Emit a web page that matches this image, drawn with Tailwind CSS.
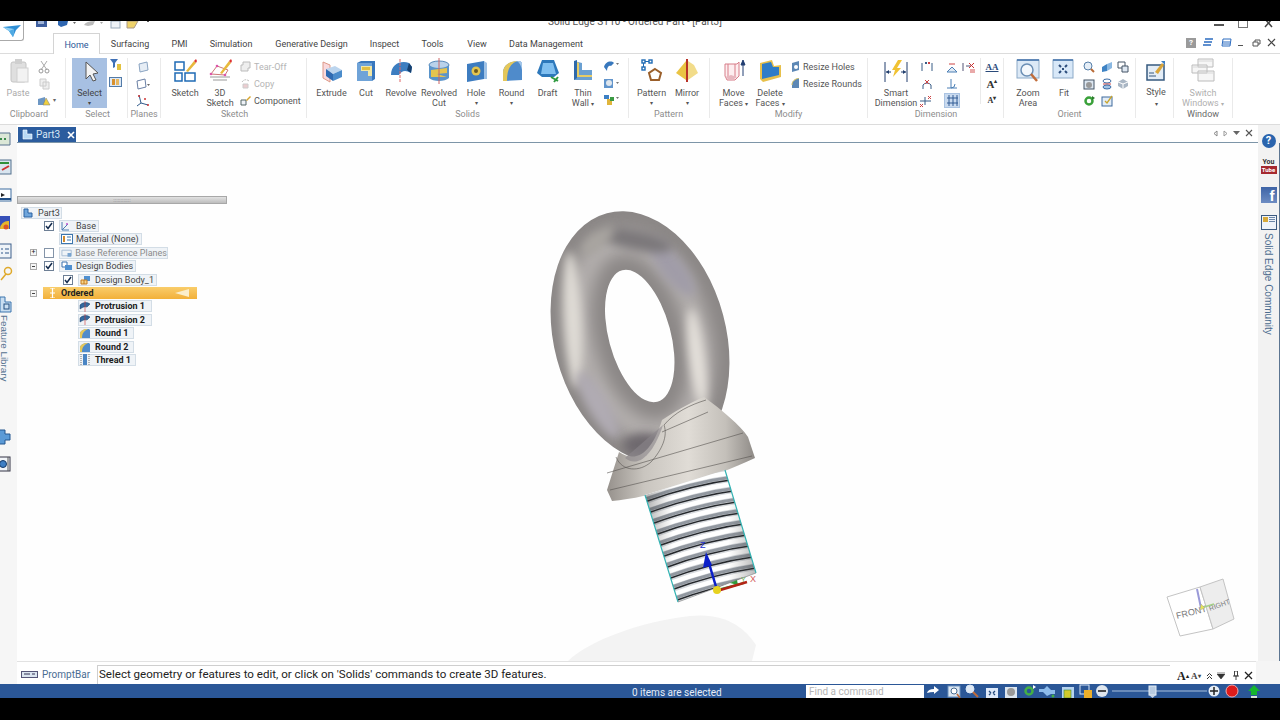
<!DOCTYPE html>
<html><head><meta charset="utf-8">
<script src="https://cdn.jsdelivr.net/npm/@tailwindcss/browser@4"></script>
</head>
<body class="bg-black overflow-hidden">
<div class="w-[1280px] h-[720px] flex flex-col bg-black text-[#555] text-[9px] leading-[10px] whitespace-nowrap [font-family:Roboto,sans-serif] overflow-hidden">
  <div class="h-[21px] bg-black shrink-0"></div>
  <div class="relative flex-1 flex flex-col bg-white overflow-hidden">
    <!-- application button -->
    <div class="absolute left-0 top-0 w-[24px] h-[20px] rounded-br-[3px] border-r border-b border-[#aaa] flex items-center justify-center z-20 bg-white">
      <svg width="20" height="14" viewBox="0 0 20 14"><path d="M1 3L19 1L14 6L11 13L7 7Z" fill="#2f8fd6"/><path d="M1 3L12 5L11 13L7 7Z" fill="#8fd0f4"/><path d="M7 7L12 5L11 13Z" fill="#4fa9e2"/></svg>
    </div>
    <!-- title strip -->
    <div class="relative h-[12px] shrink-0 overflow-hidden flex">
      <div class="w-[34px] shrink-0"></div>
      <svg width="130" height="12" viewBox="0 0 130 12"><path d="M2 0H13V6H2Z" fill="#3f5f9f"/><path d="M4 0H10V3H4Z" fill="#9fb4d8"/><path d="M24 0L30 0L34 0L33 4L27 6L24 4Z" fill="#2f66b0"/><path d="M39 1H42L40.500 3Z" fill="#666"/><path d="M50 4Q52 0 61 0L59 4L54 5Z" fill="#bbb"/><path d="M66 1H69L67.500 3Z" fill="#aaa"/><rect x="77" y="0" width="9" height="7" fill="#eef2f7" stroke="#9ab"/><path d="M93 0H101L104 0L100 7H93Z" fill="#efd36b" stroke="#a98"/><path d="M113 0H115V1H113Z" fill="#555"/></svg>
      <div class="absolute left-[548px] top-[-5px] text-[10px] leading-[12px] text-[#555]">Solid Edge ST10 - Ordered Part - [Part3]</div>
      <div class="absolute left-[1214px] top-[0px] flex items-start gap-[14px]">
        <div class="w-[10px] h-[1.500px] bg-[#555] mt-[3px]"></div>
        <div class="w-[10px] h-[7px] border border-t-0 border-[#777]"></div>
        <svg width="12" height="8" viewBox="0 0 12 8"><path d="M3 -2L10 6M10 -2L3 6" stroke="#444" stroke-width="1.500"/></svg>
      </div>
    </div>
    <!-- tabs -->
    <div class="relative h-[21px] shrink-0 flex border-b border-[#dcdcdc] text-[9px] leading-[22px] text-[#444]">
      <div class="w-[53px] shrink-0"></div>
      <div class="w-[47px] shrink-0 h-[21px] bg-white border border-b-0 border-[#d4d4d4] text-center text-[#2b5797] z-10">Home</div>
      <div class="w-[60px] shrink-0 text-center">Surfacing</div>
      <div class="w-[39px] shrink-0 text-center">PMI</div>
      <div class="w-[64px] shrink-0 text-center">Simulation</div>
      <div class="w-[97px] shrink-0 text-center">Generative Design</div>
      <div class="w-[49px] shrink-0 text-center">Inspect</div>
      <div class="w-[47px] shrink-0 text-center">Tools</div>
      <div class="w-[42px] shrink-0 text-center">View</div>
      <div class="w-[96px] shrink-0 text-center">Data Management</div>
      <div class="ml-auto pr-[4px] flex items-center gap-[6px] pb-[1px]">
        <div class="w-[10px] h-[10px] bg-[#9a9a9a] text-white text-[8px] leading-[10px] text-center font-bold">?</div>
        <svg width="12" height="10" viewBox="0 0 12 10"><path d="M3 1H11M2 4H10M1 7H9" stroke="#2c6cc0" stroke-width="1.500"/></svg>
        <svg width="12" height="10" viewBox="0 0 12 10"><path d="M3 1H11L10 8H2ZM3 4H10M3 6H10" fill="none" stroke="#2c6cc0"/></svg>
        <div class="w-[5px] h-[1px] bg-[#555] mt-[6px]"></div>
        <svg class="ml-[3px]" width="9" height="8" viewBox="0 0 9 8"><path d="M1 3H6V7H1ZM3 3V1H8V5H6" fill="none" stroke="#555"/></svg>
        <svg class="ml-[0px]" width="9" height="9" viewBox="0 0 9 9"><path d="M1 1L8 8M8 1L1 8" stroke="#444" stroke-width="1.200"/></svg>
      </div>
    </div>
    <!-- ribbon -->
    <div class="h-[71px] shrink-0 flex border-b border-[#dcdcdc] bg-white">
      <!-- Clipboard -->
      <div class="w-[66px] shrink-0 flex flex-col">
        <div class="h-[55px] flex pt-[4px]">
          <div class="w-[36px] flex flex-col items-center">
            <svg class="shrink-0" width="24" height="26" viewBox="0 0 24 26"><rect x="5" y="4" width="15" height="20" rx="2" fill="#dfdfdf" stroke="#c4c4c4"/><rect x="9" y="1" width="7" height="5" fill="#cfcfcf"/><rect x="11" y="10" width="11" height="14" fill="#f2f2f2" stroke="#d0d0d0"/></svg>
            <div class="mt-[4px] text-[#aaa]">Paste</div>
          </div>
          <div class="w-[16px] flex flex-col items-center">
            <div class="h-[17px] flex items-center"><svg width="12" height="14" viewBox="0 0 12 14"><path d="M3 1L9 10M9 1L3 10" stroke="#aaa"/><circle cx="3" cy="11" r="2" fill="none" stroke="#999"/><circle cx="9" cy="11" r="2" fill="none" stroke="#999"/></svg></div>
            <div class="h-[17px] flex items-center"><svg width="11" height="12" viewBox="0 0 11 12"><path d="M1 1H7V8H1ZM4 4H10V11H4Z" fill="#efefef" stroke="#ccc"/></svg></div>
            <div class="h-[17px] flex items-center"><svg width="14" height="13" viewBox="0 0 14 13"><path d="M1 5L8 3V11L1 11Z" fill="#6d97c4"/><path d="M9 4L13 11H6Z" fill="#f0d040" stroke="#777" stroke-width=".5"/></svg></div>
          </div>
          <div class="text-[#666] text-[6px] mt-[37px] ml-[1px]">▾</div>
        </div>
        <div class="text-center text-[#8d8d8d] pr-[8px]">Clipboard</div>
      </div>
      <div class="w-px h-[60px] mt-[4px] bg-[#eaeaea] -ml-[1px]"></div>
      <!-- Select -->
      <div class="w-[61px] shrink-0 flex flex-col">
        <div class="h-[55px] flex pt-[4px]">
          <div class="ml-[6px] w-[35px] h-[50px] bg-[#a7c0e2] flex flex-col items-center text-[#444]">
            <svg class="shrink-0" width="24" height="26" viewBox="0 0 24 26"><path d="M8 4L8 21L12 17L15 23L18 22L15 16L20 15Z" fill="#f4f4f4" stroke="#555"/></svg>
            <div class="mt-[4px]">Select</div>
            <div class="text-[6px] leading-[8px] mt-[1px]">▾</div>
          </div>
          <div class="w-[16px] flex flex-col items-center">
            <div class="h-[17px] flex items-center pb-[4px]"><svg width="13" height="13" viewBox="0 0 13 13"><path d="M1 1H9L6 5V9L4 10V5Z" fill="#3f70b5"/><path d="M8 6H12V12H8Z" fill="#e3c23f"/></svg></div>
            <div class="h-[17px] flex items-center pb-[4px]"><svg width="13" height="10" viewBox="0 0 13 10"><rect x=".5" y=".5" width="12" height="9" fill="#dce8f5" stroke="#537ba8"/><rect x="3" y="2" width="3" height="6" fill="#d8912e"/><rect x="7" y="2" width="3" height="6" fill="#e7b862"/></svg></div>
          </div>
        </div>
        <div class="text-center text-[#8d8d8d] pl-[2px]">Select</div>
      </div>
      <div class="w-px h-[60px] mt-[4px] bg-[#eaeaea]"></div>
      <!-- Planes -->
      <div class="w-[32px] shrink-0 flex flex-col">
        <div class="h-[55px] flex flex-col items-center pt-[4px] pr-[3px]">
          <div class="h-[17px] flex items-center"><svg width="12" height="12" viewBox="0 0 12 12"><path d="M2 3L10 1L11 9L3 11Z" fill="#e6edf5" stroke="#8aa4c2"/></svg></div>
          <div class="h-[17px] flex items-center"><svg width="16" height="12" viewBox="0 0 16 12"><path d="M2 3L10 1L11 9L3 11Z" fill="#fff" stroke="#6a80a5"/><path d="M12 6H15L13.500 8Z" fill="#666"/></svg></div>
          <div class="h-[17px] flex items-center"><svg width="13" height="13" viewBox="0 0 13 13"><path d="M3 1L5 9L12 11M5 9L1 12" stroke="#2f5a8a" fill="none"/><circle cx="3" cy="2" r="1" fill="#c33"/><circle cx="12" cy="11" r="1" fill="#c33"/><circle cx="9" cy="5" r="1" fill="#c33"/></svg></div>
        </div>
        <div class="text-center text-[#8d8d8d]">Planes</div>
      </div>
      <div class="w-px h-[60px] mt-[4px] bg-[#eaeaea]"></div>
      <!-- Sketch -->
      <div class="w-[145px] shrink-0 flex flex-col">
        <div class="h-[55px] flex pt-[4px]">
          <div class="w-[48px] flex flex-col items-center">
            <svg class="shrink-0" width="24" height="26" viewBox="0 0 24 26"><rect x="2" y="4" width="9" height="8" fill="none" stroke="#1f6bb5" stroke-width="1.500"/><rect x="2" y="15" width="7" height="8" fill="none" stroke="#1f6bb5" stroke-width="1.500"/><rect x="12" y="15" width="10" height="8" fill="none" stroke="#1f6bb5" stroke-width="1.500"/><path d="M13 13L21 3L23 5L15 14Z" fill="#e8b93c"/><path d="M21 3L23 1L24 3L23 5Z" fill="#d33"/></svg>
            <div class="mt-[4px]">Sketch</div>
          </div>
          <div class="w-[30px] flex flex-col items-center -ml-[4px]">
            <svg class="shrink-0" width="24" height="26" viewBox="0 0 24 26"><path d="M3 16L9 8L20 12L17 17Z" fill="none" stroke="#c77"/><path d="M2 19H22M5 22H19" stroke="#999"/><path d="M12 15L21 3L23 5L14 16Z" fill="#e8b93c"/><path d="M21 3L23 1L24 3L23 5Z" fill="#d33"/><circle cx="3" cy="16" r="1.300" fill="#d5a"/><circle cx="9" cy="8" r="1.300" fill="#d5a"/><circle cx="17" cy="17" r="1.300" fill="#d5a"/></svg>
            <div class="mt-[4px] text-center">3D<br>Sketch</div>
          </div>
          <div class="ml-[5px] flex flex-col">
            <div class="h-[17px] flex items-center gap-[3px] text-[#b5b5b5]"><svg width="11" height="11" viewBox="0 0 11 11"><path d="M3 1H10V7H8V10H1V4H3Z" fill="#eee" stroke="#bbb"/></svg>Tear-Off</div>
            <div class="h-[17px] flex items-center gap-[3px] text-[#b5b5b5]"><svg width="11" height="11" viewBox="0 0 11 11"><path d="M2 4Q5 0 9 3" fill="none" stroke="#bbb" stroke-dasharray="2 1"/><path d="M3 6H8V10H3Z" fill="#eccdd0" stroke="#ccc"/></svg>Copy</div>
            <div class="h-[17px] flex items-center gap-[3px]"><svg width="11" height="11" viewBox="0 0 11 11"><path d="M1 5H6V10H1Z" fill="#eef2f7" stroke="#566"/><path d="M6 5L10 1L11 2L7 6Z" fill="#d8a52e"/></svg>Component</div>
          </div>
        </div>
        <div class="text-center text-[#8d8d8d] pl-[2px]">Sketch</div>
      </div>
      <div class="w-px h-[60px] mt-[4px] bg-[#eaeaea]"></div>
      <!-- Solids -->
      <div class="w-[321px] shrink-0 flex flex-col">
        <div class="h-[55px] flex pt-[4px]">
          <div class="w-[46px] flex flex-col items-center pl-[3px]">
            <svg class="shrink-0" width="24" height="26" viewBox="0 0 24 26"><path d="M3 4L10 7V24L3 20Z" fill="#f9d9dc" stroke="#d98"/><path d="M6 11L15 8L22 12L13 16Z" fill="#bcd5ee"/><path d="M6 11L13 16V23L6 18Z" fill="#2f6bb2"/><path d="M13 16L22 12V19L13 23Z" fill="#4b8ccb"/></svg>
            <div class="mt-[4px]">Extrude</div>
          </div>
          <div class="w-[26px] flex flex-col items-center">
            <svg class="shrink-0" width="24" height="26" viewBox="0 0 24 26"><path d="M3 5L7 3H21V21L18 23H3Z" fill="#3877bd"/><path d="M3 5H18V23H3Z" fill="#6fa3d8"/><path d="M7 8H18V18H14V13H7Z" fill="#f2e7a4"/><path d="M8 9H16V12H8Z" fill="#e1bf45"/></svg>
            <div class="mt-[4px]">Cut</div>
          </div>
          <div class="w-[44px] flex flex-col items-center">
            <svg class="shrink-0" width="24" height="26" viewBox="0 0 24 26"><path d="M2 17C2 6 12 2 20 5L23 9L22 15C17 12 13 12 10 17Z" fill="#3c7dc0"/><path d="M20 5L23 9L22 15L18 12Z" fill="#16406f"/><path d="M11 1V25" stroke="#d66" stroke-dasharray="3 1"/></svg>
            <div class="mt-[4px]">Revolve</div>
          </div>
          <div class="w-[32px] flex flex-col items-center">
            <svg class="shrink-0" width="24" height="26" viewBox="0 0 24 26"><ellipse cx="12" cy="7" rx="10" ry="4" fill="#b9d2ea" stroke="#5688b8"/><path d="M2 7V20C6 24 18 24 22 20V7C18 11 6 11 2 7Z" fill="#5a94ca"/><path d="M4 12L20 10V15L10 16L20 19H4Z" fill="#e5c44f"/><path d="M12 0V26" stroke="#c66"/></svg>
            <div class="mt-[4px] text-center">Revolved<br>Cut</div>
          </div>
          <div class="w-[42px] flex flex-col items-center">
            <svg class="shrink-0" width="24" height="26" viewBox="0 0 24 26"><path d="M3 6L20 3V21L3 24Z" fill="#3d7cc0"/><path d="M20 3L23 5V21L20 21Z" fill="#9fc2e6"/><circle cx="12" cy="13" r="4.500" fill="#e3c54e"/><circle cx="12" cy="13" r="2" fill="#6b5a20"/></svg>
            <div class="mt-[4px]">Hole</div>
            <div class="text-[6px] leading-[8px] mt-[1px]">▾</div>
          </div>
          <div class="w-[29px] flex flex-col items-center">
            <svg class="shrink-0" width="24" height="26" viewBox="0 0 24 26"><path d="M3 23V15C3 7 10 3 20 3L22 5V22Z" fill="#4f8bcb"/><path d="M3 23V15C3 7 10 3 17 3C10 6 7 12 7 23Z" fill="#e4c75a"/><path d="M17 3H20L22 5V12C21 8 20 5 17 3Z" fill="#a3c6e9"/></svg>
            <div class="mt-[4px]">Round</div>
            <div class="text-[6px] leading-[8px] mt-[1px]">▾</div>
          </div>
          <div class="w-[43px] flex flex-col items-center">
            <svg class="shrink-0" width="24" height="26" viewBox="0 0 24 26"><path d="M6 2H18L23 15L18 19H6L1 15Z" fill="#2d78bb"/><path d="M7 5H17L20 16H5Z" fill="#80bff0"/><path d="M15 19L22 23M22 19L18 24" stroke="#2f9a3f" stroke-width="2"/></svg>
            <div class="mt-[4px]">Draft</div>
          </div>
          <div class="w-[28px] flex flex-col items-center">
            <svg class="shrink-0" width="24" height="26" viewBox="0 0 24 26"><path d="M3 3L11 5V12H21V22H3Z" fill="#6aa0d2"/><path d="M8 5V17H21V19H6V4Z" fill="#e6cc66"/><path d="M3 3L6 2V20L3 22Z" fill="#2e6aab"/></svg>
            <div class="mt-[4px] text-center">Thin<br>Wall <span class="text-[6px]">▾</span></div>
          </div>
          <div class="w-[26px] flex flex-col items-center pl-[3px]">
            <div class="h-[17px] flex items-center pb-[1px]"><svg width="18" height="12" viewBox="0 0 18 12"><path d="M1 7C2 2 8 0 11 3L8 6C6 5 4 7 4 11Z" fill="#3878bd"/><path d="M13 3H16L14.500 5Z" fill="#777"/></svg></div>
            <div class="h-[17px] flex items-center pb-[1px]"><svg width="18" height="12" viewBox="0 0 18 12"><path d="M1 2H10V11H1Z" fill="#6295cc"/><circle cx="6" cy="6" r="3" fill="#dfe6ed"/><path d="M13 5H16L14.500 7Z" fill="#777"/></svg></div>
            <div class="h-[17px] flex items-center pb-[1px]"><svg width="18" height="12" viewBox="0 0 18 12"><path d="M1 1H6V5H1Z" fill="#3d80c5"/><path d="M4 5H9V11H4Z" fill="#e0b53c"/><path d="M7 3H11V7H7Z" fill="#3b9a44"/><path d="M13 3H16L14.500 5Z" fill="#777"/></svg></div>
          </div>
        </div>
        <div class="text-center text-[#8d8d8d]">Solids</div>
      </div>
      <div class="w-px h-[60px] mt-[4px] bg-[#eaeaea]"></div>
      <!-- Pattern -->
      <div class="w-[80px] shrink-0 flex flex-col">
        <div class="h-[55px] flex pt-[4px]">
          <div class="w-[45px] pl-[0px] flex flex-col items-center">
            <svg class="shrink-0" width="24" height="26" viewBox="0 0 24 26"><rect x="2" y="2" width="3" height="3" fill="none" stroke="#1f6bb5" stroke-width="1.400"/><rect x="9" y="2" width="3" height="3" fill="none" stroke="#1f6bb5" stroke-width="1.400"/><rect x="2" y="9" width="3" height="3" fill="none" stroke="#1f6bb5" stroke-width="1.400"/><path d="M3.500 5V9M5 3.500H9" stroke="#1f6bb5"/><path d="M15 11L21 15L19 22H11L9 15Z" fill="none" stroke="#9a5f2a" stroke-width="2"/></svg>
            <div class="mt-[4px]">Pattern</div>
            <div class="text-[6px] leading-[8px] mt-[1px]">▾</div>
          </div>
          <div class="w-[26px] flex flex-col items-center">
            <svg class="shrink-0" width="24" height="26" viewBox="0 0 24 26"><path d="M11 3V22L1 15Z" fill="#eac443"/><path d="M13 3V22L23 15L19 7Z" fill="#f2dc8a"/><path d="M12 1V24" stroke="#b83227" stroke-width="2"/></svg>
            <div class="mt-[4px]">Mirror</div>
            <div class="text-[6px] leading-[8px] mt-[1px]">▾</div>
          </div>
        </div>
        <div class="text-center text-[#8d8d8d] pr-[1px]">Pattern</div>
      </div>
      <div class="w-px h-[60px] mt-[4px] bg-[#eaeaea]"></div>
      <!-- Modify -->
      <div class="w-[157px] shrink-0 flex flex-col">
        <div class="h-[55px] flex pt-[4px]">
          <div class="w-[47px] flex flex-col items-center">
            <svg class="shrink-0" width="24" height="26" viewBox="0 0 24 26"><path d="M3 6H15L17 4V18L13 22H5L3 18Z" fill="#fdeef0" stroke="#d77d88"/><path d="M6 6V20M13 6V20" stroke="#d77d88"/><path d="M3 19L9 17L15 19L9 23Z" fill="#e7b7bf"/><path d="M21 18V4M19 7L21 2L23 7Z" fill="#223e72" stroke="#223e72"/></svg>
            <div class="mt-[4px] text-center">Move<br>Faces <span class="text-[6px]">▾</span></div>
          </div>
          <div class="w-[26px] flex flex-col items-center">
            <svg class="shrink-0" width="24" height="26" viewBox="0 0 24 26"><path d="M2 5L14 2L16 8L23 7V19L5 24L2 21Z" fill="#e7c04b"/><path d="M4 6L13 4L15 9L21 9V17L4 21Z" fill="#2e7cc7"/></svg>
            <div class="mt-[4px] text-center">Delete<br>Faces <span class="text-[6px]">▾</span></div>
          </div>
          <div class="ml-[8px] flex flex-col">
            <div class="h-[17px] flex items-center gap-[3px]"><svg width="9" height="11" viewBox="0 0 9 11"><path d="M1 2L8 0V9L1 11Z" fill="#5d88b5"/><circle cx="5" cy="6" r="2" fill="#fff"/></svg>Resize Holes</div>
            <div class="h-[17px] flex items-center gap-[3px]"><svg width="9" height="11" viewBox="0 0 9 11"><path d="M1 10V7C1 3 4 1 8 0V10Z" fill="#5d88b5"/><path d="M1 7C1 3 4 1 8 0" stroke="#d9c45f" fill="none"/></svg>Resize Rounds</div>
          </div>
        </div>
        <div class="text-center text-[#8d8d8d]">Modify</div>
      </div>
      <div class="w-px h-[60px] mt-[4px] bg-[#eaeaea]"></div>
      <!-- Dimension -->
      <div class="w-[135px] shrink-0 flex flex-col">
        <div class="h-[55px] flex pt-[4px]">
          <div class="w-[56px] shrink-0 flex flex-col items-center">
            <svg class="shrink-0" width="24" height="26" viewBox="0 0 24 26"><path d="M1 4V24M23 4V24" stroke="#223f6e"/><path d="M2 14H7M17 14H22" stroke="#223f6e"/><path d="M2 14L5 12V16ZM22 14L19 12V16Z" fill="#223f6e"/><path d="M14 2H18L13 10H17L9 19L11 12H8Z" fill="#f1c232"/></svg>
            <div class="mt-[4px] text-center">Smart<br>Dimension</div>
          </div>
          <div class="w-[16px] shrink-0 -ml-[5px] flex flex-col items-center">
            <div class="h-[17px] flex items-center"><svg width="12" height="12" viewBox="0 0 12 12"><path d="M1 2V10M11 2V10M4 1L6 3M6 1L4 3" stroke="#395c86"/><path d="M7 1L9 3M9 1L7 3" stroke="#c44"/></svg></div>
            <div class="h-[17px] flex items-center"><svg width="12" height="12" viewBox="0 0 12 12"><path d="M2 7A5 5 0 0 1 10 7M2 7V11M10 7V11" fill="none" stroke="#395c86"/><path d="M4 2L8 6M8 2L4 6" stroke="#c44"/></svg></div>
            <div class="h-[17px] flex items-center"><svg width="16" height="12" viewBox="0 0 16 12"><path d="M1 6H12M6 2V10" stroke="#395c86"/><path d="M1 9L4 12M4 9L1 12M9 1L12 4M12 1L9 4" stroke="#c44"/></svg></div>
          </div>
          <div class="w-[9px] shrink-0"></div>
          <div class="w-[16px] shrink-0 flex flex-col items-center">
            <div class="h-[17px] flex items-center"><svg width="12" height="12" viewBox="0 0 12 12"><path d="M1 11H11L6 6Z" fill="#dfe9f4" stroke="#4b7fb5"/><path d="M3 3H9" stroke="#c44"/></svg></div>
            <div class="h-[17px] flex items-center"><svg width="12" height="12" viewBox="0 0 12 12"><path d="M1 10H11M5 1V10" stroke="#4b7fb5"/><path d="M5 10A4 4 0 0 0 9 6" stroke="#4b7fb5" fill="none"/></svg></div>
            <div class="h-[15px] w-[16px] bg-[#c9daef] border border-[#aac3e2] flex items-center justify-center mt-[1px]"><svg width="11" height="11" viewBox="0 0 11 11"><path d="M2 0V11M6 0V11M10 0V11M0 3H11M0 8H11" stroke="#335d95"/></svg></div>
          </div>
          <div class="w-[1px] shrink-0"></div>
          <div class="w-[16px] shrink-0 flex flex-col items-center">
            <div class="h-[17px] flex items-center"><svg width="14" height="12" viewBox="0 0 14 12"><path d="M1 2V10M4 5H9" stroke="#557"/><path d="M7 2L12 7M12 2L7 7" stroke="#c33"/><rect x="8" y="8" width="5" height="4" fill="#e9a9a9"/></svg></div>
          </div>
          <div class="w-[3px] shrink-0"></div>
          <div class="w-px h-[46px] shrink-0 bg-[#eaeaea]"></div>
          <div class="w-[22px] shrink-0 flex flex-col items-center">
            <div class="h-[17px] flex items-center text-[9px] text-[#2a4a7a] font-bold [font-family:'Liberation_Serif',serif] underline">AA</div>
            <div class="h-[17px] flex items-center text-[11px] text-[#333] font-bold [font-family:'Liberation_Serif',serif]">A<span class="text-[6px] -mt-[6px]">▴</span></div>
            <div class="h-[17px] flex items-center text-[8px] text-[#333] font-bold [font-family:'Liberation_Serif',serif]">A<span class="text-[6px] -mt-[5px]">▾</span></div>
          </div>
        </div>
        <div class="text-center text-[#8d8d8d] pl-[1px]">Dimension</div>
      </div>
      <div class="w-px h-[60px] mt-[4px] bg-[#eaeaea]"></div>
      <!-- Orient -->
      <div class="w-[131px] shrink-0 flex flex-col">
        <div class="h-[55px] flex pt-[4px]">
          <div class="w-[48px] flex flex-col items-center">
            <svg class="shrink-0" width="24" height="26" viewBox="0 0 24 26"><rect x="1" y="2" width="22" height="18" fill="#dce9f6" stroke="#8caac8"/><path d="M1 2H23" stroke="#3f6fa8" stroke-width="1.500"/><circle cx="11" cy="12" r="6" fill="#f4f8fc" stroke="#6b8fb5" stroke-width="1.500"/><path d="M15 16L21 23" stroke="#c06c3a" stroke-width="2.500"/></svg>
            <div class="mt-[4px] text-center">Zoom<br>Area</div>
          </div>
          <div class="w-[24px] flex flex-col items-center">
            <svg class="shrink-0" width="24" height="26" viewBox="0 0 24 26"><rect x="1" y="2" width="20" height="18" fill="#d8e8f8" stroke="#8caac8"/><path d="M1 2H21" stroke="#3f6fa8" stroke-width="1.500"/><path d="M7 7L9 9M15 7L13 9M7 15L9 13M15 15L13 13" stroke="#2c4d7c" stroke-width="2"/><rect x="10" y="10" width="2" height="2" fill="#2c4d7c"/></svg>
            <div class="mt-[4px]">Fit</div>
          </div>
          <div class="w-[4px]"></div>
          <div class="w-[18px] flex flex-col items-center">
            <div class="h-[17px] flex items-center"><svg width="12" height="12" viewBox="0 0 12 12"><circle cx="5" cy="5" r="4" fill="#e5eef7" stroke="#557ea8"/><path d="M8 8L11 11" stroke="#b96b36" stroke-width="2"/></svg></div>
            <div class="h-[17px] flex items-center"><svg width="12" height="12" viewBox="0 0 12 12"><rect x="1" y="2" width="10" height="9" fill="#dce6f0" stroke="#456"/><circle cx="6" cy="7" r="3" fill="#999"/></svg></div>
            <div class="h-[17px] flex items-center"><svg width="12" height="12" viewBox="0 0 12 12"><circle cx="6" cy="6" r="3.500" fill="none" stroke="#3aa13a" stroke-width="2.500"/><path d="M9 1L12 3L9 5Z" fill="#2a7b2a"/></svg></div>
          </div>
          <div class="w-[17px] flex flex-col items-center">
            <div class="h-[17px] flex items-center"><svg width="12" height="12" viewBox="0 0 12 12"><path d="M1 6L6 3V10L1 11Z" fill="#3f83c4"/><path d="M6 3L11 1V7L6 10Z" fill="#8ab8e2"/></svg></div>
            <div class="h-[17px] flex items-center"><svg width="12" height="12" viewBox="0 0 12 12"><ellipse cx="6" cy="3" rx="4" ry="2" fill="none" stroke="#3c6ca5"/><path d="M2 6H10" stroke="#c44"/><ellipse cx="6" cy="9" rx="4" ry="2" fill="#a3c3e4" stroke="#3c6ca5"/></svg></div>
            <div class="h-[17px] flex items-center"><svg width="12" height="12" viewBox="0 0 12 12"><rect x="1" y="2" width="10" height="9" fill="#e3edf7" stroke="#3e6a9d"/><path d="M4 6L6 8L11 1" stroke="#c9a52d" fill="none" stroke-width="1.300"/></svg></div>
          </div>
          <div class="w-[16px] flex flex-col items-center">
            <div class="h-[17px] flex items-center"><svg width="12" height="12" viewBox="0 0 12 12"><path d="M1 1H8V7H1Z" fill="#fff" stroke="#456"/><path d="M5 5H11V11H5Z" fill="#dfe8f2" stroke="#456"/></svg></div>
            <div class="h-[17px] flex items-center"><svg width="12" height="12" viewBox="0 0 12 12"><path d="M6 1L11 4V8L6 11L1 8V4Z" fill="#a9b6c4"/><path d="M6 6L11 4M6 6L1 4M6 6V11" stroke="#fff"/></svg></div>
          </div>
        </div>
        <div class="text-center text-[#8d8d8d]">Orient</div>
      </div>
      <div class="w-px h-[60px] mt-[4px] bg-[#eaeaea]"></div>
      <!-- Style -->
      <div class="w-[37px] shrink-0 flex flex-col">
        <div class="h-[55px] flex flex-col items-center pt-[3px] pl-[3px]">
          <svg class="shrink-0" width="24" height="26" viewBox="0 0 24 26"><rect x="3" y="8" width="17" height="15" fill="#e4edf6" stroke="#36597f" stroke-width="1.500"/><path d="M5 19H12M5 16H10" stroke="#36597f"/><path d="M11 15L18 6L20 8L14 17Z" fill="#d9a53a"/><path d="M17 4H21V8Z" fill="#3d7fc4"/></svg>
          <div class="mt-[4px]">Style</div>
          <div class="text-[6px] leading-[8px] mt-[3px]">▾</div>
        </div>
        <div></div>
      </div>
      <div class="w-px h-[60px] mt-[4px] bg-[#eaeaea]"></div>
      <!-- Window -->
      <div class="w-[58px] shrink-0 flex flex-col">
        <div class="h-[55px] flex flex-col items-center pt-[4px]">
          <svg class="shrink-0" width="24" height="26" viewBox="0 0 24 26"><path d="M7 1H22V9H7Z M1 7H16V15H1Z M7 13H23V23H7Z" fill="#f6f6f6" stroke="#bcbcbc"/><path d="M7 3H22M1 9H16M7 15H23" stroke="#d8d8d8"/></svg>
          <div class="mt-[4px] text-center text-[#b0b0b0]">Switch<br>Windows <span class="text-[6px]">▾</span></div>
        </div>
        <div class="text-center text-[#6a6a6a]">Window</div>
      </div>
      <div class="w-px h-[60px] mt-[4px] bg-[#eaeaea]"></div>
    </div>
    <!-- doc tabs -->
    <div class="h-[18px] shrink-0 flex items-end border-b border-[#7d95a8] bg-white relative">
      <div class="absolute left-0 top-0 w-[17px] h-[18px] bg-[#f6f6f6]"></div>
      <div class="absolute right-0 top-0 w-[22px] h-[18px] bg-[#f2f2f2]"></div>
      <div class="relative ml-[18px] w-[58px] h-[15px] bg-[#2b5c9e] flex items-center gap-[3px] pl-[4px] text-white text-[10px]">
        <svg width="11" height="11" viewBox="0 0 11 11"><path d="M1 1H5V5H10V10H1Z" fill="#b9d9f5" stroke="#fff" stroke-width=".6"/></svg>
        <span class="text-[#d9e6f4]">Part3</span>
        <svg class="ml-[4px]" width="8" height="8" viewBox="0 0 8 8"><path d="M1 1L7 7M7 1L1 7" stroke="#fff" stroke-width="1.600"/></svg>
      </div>
      <div class="relative ml-auto mr-[27px] mb-[5px] flex items-center gap-[5px]">
        <svg width="5" height="7" viewBox="0 0 5 7"><path d="M4 1L1 3.500L4 6Z" fill="none" stroke="#888"/></svg>
        <svg width="5" height="7" viewBox="0 0 5 7"><path d="M1 1L4 3.500L1 6Z" fill="none" stroke="#999"/></svg>
        <svg width="7" height="5" viewBox="0 0 7 5"><path d="M0 0H7L3.500 4Z" fill="#666"/></svg>
        <svg width="8" height="8" viewBox="0 0 8 8"><path d="M1 1L7 7M7 1L1 7" stroke="#555" stroke-width="1.100"/></svg>
      </div>
    </div>
    <!-- main -->
    <div class="relative flex-1 flex bg-[#fefefe]">
      <!-- left side strip -->
      <div class="w-[17px] shrink-0 bg-[#f6f6f6] relative z-10">
        <div class="absolute left-0 top-[-18px] w-[17px] h-[360px] overflow-hidden">
        <svg class="absolute left-0 top-[18px] overflow-visible" width="12" height="340" viewBox="0 0 12 340">
          <path d="M-2 -10H10V2H-2Z" fill="#dbe7d7" stroke="#58738f"/><path d="M0 -4H2M4 -4H6" stroke="#3a8a4a" stroke-width="2"/>
          <rect x="-2" y="17" width="13" height="14" fill="#d9e5ef" stroke="#53708e"/><path d="M0 20H9" stroke="#2f8f3a" stroke-width="2"/><path d="M2 27L9 23" stroke="#c33" stroke-width="2"/>
          <rect x="-2" y="46" width="13" height="12" fill="#fff" stroke="#3c6da0"/><path d="M1 50L5 52L1 54Z" fill="#222"/><path d="M-2 56H11" stroke="#234f85" stroke-width="2"/>
          <rect x="-2" y="73" width="12" height="13" fill="#3650b8"/><path d="M0 86A8 8 0 0 1 9 78V86Z" fill="#e5b62d"/><circle cx="6" cy="84" r="2.500" fill="#d9532a"/>
          <rect x="-2" y="101" width="13" height="14" fill="#eef3f8" stroke="#3c5f8b"/><path d="M1 106H3M5 106H9M1 110H3M5 110H9" stroke="#2e578a"/>
          <circle cx="8" cy="128" r="3.500" fill="none" stroke="#dfa92b" stroke-width="1.500"/><path d="M6 131L1 137" stroke="#dfa92b" stroke-width="1.500"/>
          <path d="M0 154H5V159H11V169H0Z" fill="#c9def1" stroke="#3b74ae"/><rect x="4" y="161" width="5" height="5" fill="none" stroke="#234e80"/>
          <path d="M-2 287H5V291H10V297H5V301H-2Z" fill="#5b9ad6" stroke="#24578f"/>
          <rect x="-2" y="314" width="12" height="14" fill="#f2f5f9" stroke="#334"/><circle cx="3" cy="321" r="3.500" fill="#3e7fc4" stroke="#173a66"/><path d="M8 314V328" stroke="#555"/>
        </svg>
        </div>
        <div class="absolute left-[-1px] top-[172px] w-[11px] h-[66px] text-[9.800px] leading-[11px] text-[#54718f] [writing-mode:vertical-rl] [font-family:'Liberation_Sans',sans-serif]">Feature Library</div>
      </div>
      <div class="flex-1 relative">
        <!-- eyebolt -->
        <svg class="absolute left-[-17px] top-[-143px]" width="1280" height="661" viewBox="0 0 1280 661">
          <defs>
            <clipPath id="ring"><path clip-rule="evenodd" d="M554 337a86 128 0 1 0 172 0a86 128 0 1 0 -172 0ZM609 336a31 68 0 1 0 62 0a31 68 0 1 0 -62 0Z" transform="rotate(-15 640 337)"/></clipPath>
            <clipPath id="th"><path d="M645 495L725 470L756 573L678 602Z"/></clipPath>
            <filter id="b8" x="-80%" y="-80%" width="260%" height="260%"><feGaussianBlur stdDeviation="8"/></filter>
            <filter id="b5" x="-80%" y="-80%" width="260%" height="260%"><feGaussianBlur stdDeviation="5"/></filter>
            <filter id="b1"><feGaussianBlur stdDeviation=".6"/></filter>
            <linearGradient id="col" x1="0" y1="0" x2="1" y2="0"><stop offset="0" stop-color="#96918c"/><stop offset=".25" stop-color="#c9c5bf"/><stop offset=".55" stop-color="#e0dcd6"/><stop offset=".8" stop-color="#c4c0ba"/><stop offset="1" stop-color="#8e8a86"/></linearGradient>
            <linearGradient id="tedge" x1="0" y1="0" x2="1" y2="0"><stop offset="0" stop-color="#333" stop-opacity=".4"/><stop offset=".25" stop-color="#555" stop-opacity="0"/><stop offset=".75" stop-color="#555" stop-opacity="0"/><stop offset="1" stop-color="#333" stop-opacity=".35"/></linearGradient>
            <g id="t"><path d="M641 496Q690 478 735 472" stroke="#ffffff" stroke-width="4.500" fill="none" filter="url(#b1)"/><path d="M641 500.500Q690 482.500 736 476.500" stroke="#9298a0" stroke-width="3" fill="none" filter="url(#b1)"/><path d="M642 503Q690 485 737 479" stroke="#24272b" stroke-width="1.500" fill="none"/></g>
          </defs>
          <path d="M568 661C590 640 640 622 690 616C725 612 745 628 756 645L752 661Z" fill="#f3f3f3"/>
          <!-- torus -->
          <g clip-path="url(#ring)">
            <rect x="520" y="190" width="240" height="300" fill="#8b8786"/>
            <ellipse cx="640" cy="337" rx="58" ry="97" transform="rotate(-15 640 337)" fill="none" stroke="#b3afad" stroke-width="24" filter="url(#b8)"/>
            <ellipse cx="573" cy="320" rx="9" ry="68" transform="rotate(-3 573 320)" fill="#dfdbd5" filter="url(#b5)"/>
            <ellipse cx="598" cy="405" rx="10" ry="38" transform="rotate(-30 598 405)" fill="#b0abb3" filter="url(#b5)"/>
            <ellipse cx="697" cy="358" rx="8" ry="50" transform="rotate(-7 697 358)" fill="#e4e0da" filter="url(#b5)"/>
            <ellipse cx="672" cy="268" rx="11" ry="34" transform="rotate(-38 672 268)" fill="#a09ca8" filter="url(#b5)"/>
            <ellipse cx="635" cy="240" rx="38" ry="10" transform="rotate(12 635 240)" fill="#7b787a" filter="url(#b5)"/>
            <ellipse cx="598" cy="240" rx="20" ry="8" transform="rotate(-40 598 240)" fill="#a9a5a0" filter="url(#b5)"/>
            <ellipse cx="645" cy="445" rx="22" ry="12" fill="#6e696e" filter="url(#b5)"/>
          </g>
          <!-- collar -->
          <path d="M619 452C640 466 654 446 662 420C680 408 696 400 704 397C722 410 740 425 748 437L755 458C712 478 650 498 612 501L607 490Z" fill="url(#col)"/>
          <path d="M625 458C640 470 655 450 663 425" fill="#8b868b" opacity=".6"/>
          <path d="M616 457C622 472 640 472 651 462C662 450 668 436 664 425M664 425C675 412 690 405 706 400M662 432L708 412M607 473L743 433M610 490L752 456" fill="none" stroke="#55524f" stroke-width=".6"/>
          <!-- thread -->
          <g clip-path="url(#th)">
            <rect x="640" y="465" width="125" height="145" fill="#d5d8dc"/>
            <use href="#t"/>
            <use href="#t" transform="translate(3.300 11)"/>
            <use href="#t" transform="translate(6.600 22)"/>
            <use href="#t" transform="translate(9.900 33)"/>
            <use href="#t" transform="translate(13.200 44)"/>
            <use href="#t" transform="translate(16.500 55)"/>
            <use href="#t" transform="translate(19.800 66)"/>
            <use href="#t" transform="translate(23.100 77)"/>
            <use href="#t" transform="translate(26.400 88)"/>
            <use href="#t" transform="translate(29.700 99)"/>
            <path d="M645 495L725 470L756 573L678 602Z" fill="url(#tedge)"/>
          </g>
          <path d="M645 495L678 602M725 470L756 573" stroke="#33b3b3" stroke-width="1.200"/>
          <path d="M678 602L756 573" stroke="#777" stroke-width=".6"/>
          <!-- axes -->
          <path d="M717 590L708 560" stroke="#0b1fc9" stroke-width="2.500"/><path d="M706 552L703 568L712 565Z" fill="#0b1fc9"/>
          <text x="700" y="548" font-size="9" fill="#2230cc" font-family="Liberation Sans">Z</text>
          <path d="M717 590L744 583" stroke="#2f9a3a" stroke-width="2"/><path d="M730 583L737 580L738 585Z" fill="#2f9a3a"/>
          <text x="741" y="582" font-size="7" fill="#62b34f" font-family="Liberation Sans">Y</text>
          <path d="M717 591L747 582" stroke="#b32415" stroke-width="2.500"/>
          <text x="750" y="582" font-size="9" fill="#d25b5b" font-family="Liberation Sans">X</text>
          <circle cx="717" cy="590" r="4" fill="#e7d21f"/>
          <!-- view cube -->
          <path d="M1167 597L1200 587L1213 629L1180 636Z" fill="#fff" stroke="#c4c4c4"/>
          <path d="M1200 587L1223 579L1234 619L1213 629Z" fill="#ededed" stroke="#c4c4c4"/>
          <text transform="translate(1177 619) rotate(-14)" font-size="9" fill="#777" font-family="Liberation Sans">FRONT</text>
          <text transform="translate(1210 611) rotate(-20)" font-size="7" fill="#777" font-family="Liberation Sans">RIGHT</text>
          <path d="M1201 608L1197 589" stroke="#9a9ad8" stroke-width="2"/><path d="M1201 608L1214 604" stroke="#a6cf88" stroke-width="1.500"/><path d="M1201 604L1205 608L1200 610Z" fill="#e6e35a" stroke="#999" stroke-width=".4"/>
        </svg>
        <!-- tree -->
        <div class="absolute left-0 top-[53px] w-[210px]">
          <div class="h-[8px] bg-gradient-to-b from-[#e2e2e2] to-[#bdbdbd] border border-[#a8a8a8] flex items-center justify-center text-[#777] text-[6px] leading-[4px]">::::::::::::</div>
          <div class="h-[2px]"></div>
          <div class="text-[#222] text-[9px] leading-[10px]">
            <div class="h-[13.400px] flex items-center pl-[4px]">
              <div class="h-[12px] w-[41px] flex items-center gap-[5px] pl-[1px] bg-[#eff3f7] border border-[#d3dde6]"><svg width="10" height="10" viewBox="0 0 10 10"><path d="M1 1H5V5H9V9H1Z" fill="#6fa6dc" stroke="#2b62a3"/></svg><span class="text-[#444]">Part3</span></div>
            </div>
            <div class="h-[13.400px] flex items-center pl-[27px]">
              <div class="w-[10px] h-[10px] border border-[#6d7f95] bg-white flex items-center justify-center mr-[5px]"><svg width="8" height="8" viewBox="0 0 8 8"><path d="M1 4L3 6.500L7 1" fill="none" stroke="#152c4e" stroke-width="1.500"/></svg></div>
              <div class="h-[12px] w-[40px] flex items-center gap-[6px] pl-[1px] bg-[#eff3f7] border border-[#d3dde6]"><svg width="9" height="10" viewBox="0 0 9 10"><path d="M1 1V9H8M1 9L7 3" fill="none" stroke="#4b7cb2"/><circle cx="6" cy="3" r="1" fill="#b5c"/></svg><span class="text-[#444]">Base</span></div>
            </div>
            <div class="h-[13.400px] flex items-center pl-[42px]">
              <div class="h-[12px] w-[83px] flex items-center gap-[3px] pl-[1px] bg-[#eff3f7] border border-[#d3dde6]"><svg width="12" height="10" viewBox="0 0 12 10"><rect x=".5" y=".5" width="11" height="9" fill="#fff" stroke="#3d76ad"/><path d="M3 2V8" stroke="#d28a2c" stroke-width="2"/><path d="M6 3H10M6 6H10" stroke="#3d76ad"/></svg><span class="text-[#444]">Material (None)</span></div>
            </div>
            <div class="h-[13.400px] flex items-center pl-[13px]">
              <div class="w-[7px] h-[7px] border border-[#aaa] mr-[7px] text-[7px] leading-[5px] text-center bg-[#f6f6f6]">+</div>
              <div class="w-[10px] h-[10px] border border-[#8494a8] bg-white mr-[5px]"></div>
              <div class="h-[12px] w-[109px] flex items-center gap-[3px] pl-[1px] bg-[#eff3f7] border border-[#d3dde6]"><svg width="12" height="10" viewBox="0 0 12 10"><path d="M1 2H11V8H1Z" fill="none" stroke="#a6bcd4"/><path d="M7 5H11V9H7Z" fill="#79a4cf"/></svg><span class="text-[#8b8b8b]">Base Reference Planes</span></div>
            </div>
            <div class="h-[13.400px] flex items-center pl-[13px]">
              <div class="w-[7px] h-[7px] border border-[#aaa] mr-[7px] relative bg-[#f6f6f6]"><div class="absolute left-[1px] top-[2px] w-[3px] h-px bg-[#444]"></div></div>
              <div class="w-[10px] h-[10px] border border-[#6d7f95] bg-white flex items-center justify-center mr-[5px]"><svg width="8" height="8" viewBox="0 0 8 8"><path d="M1 4L3 6.500L7 1" fill="none" stroke="#152c4e" stroke-width="1.500"/></svg></div>
              <div class="h-[12px] w-[77px] flex items-center gap-[3px] pl-[1px] bg-[#eff3f7] border border-[#d3dde6]"><svg width="12" height="10" viewBox="0 0 12 10"><path d="M1 1H6V6H1Z" fill="#fff" stroke="#3b70ad"/><path d="M4 4H11V9H4Z" fill="#4e8fd0"/></svg><span class="text-[#444]">Design Bodies</span></div>
            </div>
            <div class="h-[13.400px] flex items-center pl-[46px]">
              <div class="w-[10px] h-[10px] border border-[#6d7f95] bg-white flex items-center justify-center mr-[5px]"><svg width="8" height="8" viewBox="0 0 8 8"><path d="M1 4L3 6.500L7 1" fill="none" stroke="#152c4e" stroke-width="1.500"/></svg></div>
              <div class="h-[12px] w-[79px] flex items-center gap-[3px] pl-[1px] bg-[#eff3f7] border border-[#d3dde6]"><svg width="12" height="10" viewBox="0 0 12 10"><path d="M4 1H10V6H4Z" fill="#4e8fd0"/><path d="M1 5H7V9H1ZM4 5V9" fill="#f5d58a" stroke="#c57a1f"/></svg><span class="text-[#444]">Design Body_1</span></div>
            </div>
            <div class="h-[13.400px] flex items-center pl-[13px]">
              <div class="w-[7px] h-[7px] border border-[#aaa] mr-[6px] relative bg-[#f6f6f6]"><div class="absolute left-[1px] top-[2px] w-[3px] h-px bg-[#444]"></div></div>
              <div class="h-[12px] w-[154px] flex items-center pl-[7px] pr-[8px] bg-gradient-to-b from-[#f9cd6a] to-[#f2b038]">
                <svg width="5" height="10" viewBox="0 0 5 10"><path d="M0 0H5M2.500 0V10M0 10H5M0 5H5" stroke="#fff" stroke-width="1.200"/></svg>
                <span class="font-bold text-[#222] ml-[6px]">Ordered</span>
                <svg class="ml-auto" width="14" height="8" viewBox="0 0 14 8"><path d="M0 4L14 0V8Z" fill="#fbeecb"/></svg>
              </div>
            </div>
            <div class="h-[13.400px] flex items-center pl-[61px]">
              <div class="h-[12px] w-[74px] flex items-center gap-[4px] pl-[0px] bg-[#eff3f7] border border-[#d3dde6]"><svg width="12" height="11" viewBox="0 0 12 11"><path d="M1 4C4 1 8 1 11 3L8 6C5 5 3 7 1 8Z" fill="#35699f" stroke="#143c66" stroke-width=".5"/><path d="M6 0V11" stroke="#c33" stroke-width=".6"/></svg><span class="font-bold text-[#1c1c1c]">Protrusion 1</span></div>
            </div>
            <div class="h-[13.400px] flex items-center pl-[61px]">
              <div class="h-[12px] w-[74px] flex items-center gap-[4px] pl-[0px] bg-[#eff3f7] border border-[#d3dde6]"><svg width="12" height="11" viewBox="0 0 12 11"><path d="M1 4C4 1 8 1 11 3L8 6C5 5 3 7 1 8Z" fill="#35699f" stroke="#143c66" stroke-width=".5"/><path d="M6 0V11" stroke="#c33" stroke-width=".6"/></svg><span class="font-bold text-[#1c1c1c]">Protrusion 2</span></div>
            </div>
            <div class="h-[13.400px] flex items-center pl-[61px]">
              <div class="h-[12px] w-[56px] flex items-center gap-[4px] pl-[0px] bg-[#eff3f7] border border-[#d3dde6]"><svg width="12" height="10" viewBox="0 0 12 10"><path d="M1 10V6C1 3 4 1 10 1L11 2V10Z" fill="#4f8bcb"/><path d="M1 10V6C1 3 4 1 9 1C5 3 3 5 3 10Z" fill="#e4c75a"/></svg><span class="font-bold text-[#1c1c1c]">Round 1</span></div>
            </div>
            <div class="h-[13.400px] flex items-center pl-[61px]">
              <div class="h-[12px] w-[56px] flex items-center gap-[4px] pl-[0px] bg-[#eff3f7] border border-[#d3dde6]"><svg width="12" height="10" viewBox="0 0 12 10"><path d="M1 10V6C1 3 4 1 10 1L11 2V10Z" fill="#4f8bcb"/><path d="M1 10V6C1 3 4 1 9 1C5 3 3 5 3 10Z" fill="#e4c75a"/></svg><span class="font-bold text-[#1c1c1c]">Round 2</span></div>
            </div>
            <div class="h-[13.400px] flex items-center pl-[61px]">
              <div class="h-[12px] w-[58px] flex items-center gap-[4px] pl-[0px] bg-[#eff3f7] border border-[#d3dde6]"><svg width="12" height="11" viewBox="0 0 12 11"><path d="M2 0V11M10 0V11" stroke="#777" stroke-dasharray="1 1"/><path d="M4 0H8V11H4Z" fill="#4a85c4"/></svg><span class="font-bold text-[#1c1c1c]">Thread 1</span></div>
            </div>
          </div>
        </div>
      </div>
      <!-- right side strip -->
      <div class="w-[22px] shrink-0 bg-[#f2f2f2] border-r border-[#5c7591] flex flex-col items-center relative">
        <div class="mt-[-9px] flex flex-col items-center">
          <div class="w-[14px] h-[14px] rounded-full bg-[#2a64ad] text-white text-[11px] leading-[14px] text-center font-bold">?</div>
          <div class="mt-[11px] w-[16px] h-[15px] flex flex-col items-center text-[7px] leading-[7px] font-bold">
            <div class="text-[#333]">You</div>
            <div class="w-[16px] h-[8px] bg-[#a5292f] text-white text-[6px] text-center leading-[8px]">Tube</div>
          </div>
          <div class="mt-[13px] w-[16px] h-[16px] bg-gradient-to-b from-[#3e64a6] to-[#6d8cc2] text-white text-[15px] leading-[17px] text-right pr-[2px] font-bold [font-family:'Liberation_Sans',sans-serif]">f</div>
          <div class="mt-[12px] w-[16px] h-[15px] border border-[#3c5a80] bg-[#eef3f9] flex gap-[1px] p-[1px]"><div class="w-[5px] h-[5px] bg-[#d7a93a]"></div><div class="flex-1 flex flex-col gap-[1px]"><div class="h-px bg-[#6c86a8]"></div><div class="h-px bg-[#6c86a8]"></div><div class="h-px bg-[#6c86a8]"></div></div></div>
          <div class="mt-[3px] [writing-mode:vertical-rl] text-[10px] leading-[11px] text-[#4c6c8f] [font-family:'Liberation_Sans',sans-serif]">Solid Edge Community</div>
        </div>
      </div>
    </div>
    <!-- prompt bar -->
    <div class="h-[23px] shrink-0 flex bg-white border-t border-[#e2e2e2]">
      <div class="w-[17px] shrink-0 bg-[#f6f6f6] -mt-px"></div>
      <div class="flex-1 flex relative">
        <div class="w-[80px] flex items-center pl-[4px] gap-[4px] pt-[3px] text-[10px] text-[#4a6d92]">
          <svg width="17" height="7" viewBox="0 0 17 7"><rect x=".5" y=".5" width="16" height="6" fill="#dbe5f0" stroke="#557"/><path d="M3 3H9M11 3H14" stroke="#335"/></svg>PromptBar
        </div>
        <div class="w-[1073px] mt-[3px] border-l border-t border-[#cfcfcf] pl-[1px] text-[11.550px] leading-[17px] text-[#222]">Select geometry or features to edit, or click on 'Solids' commands to create 3D features.</div>
        <div class="flex items-center pl-[7px] pt-[5px] text-[#222] font-bold [font-family:'Liberation_Serif',serif]">
          <span class="w-[14px] text-[12px] leading-[12px]">A<span class="text-[6px] align-top">▴</span></span>
          <span class="w-[12px] text-[9px] leading-[12px] text-[#444]">A<span class="text-[6px] align-top">▾</span></span>
          <svg class="ml-[3px]" width="7" height="8" viewBox="0 0 7 8"><path d="M1 4L3.500 1.500L6 4M1 7L3.500 4.500L6 7" fill="none" stroke="#333"/></svg>
          <svg class="ml-[4px]" width="8" height="7" viewBox="0 0 8 7"><path d="M0 0H8M0 2H8L4 7Z" fill="#333" stroke="#333" stroke-width=".6"/></svg>
          <svg class="ml-[8px]" width="6" height="9" viewBox="0 0 6 9"><path d="M1.500 0H4.500V5H1.500ZM0 5H6M3 5V9" fill="none" stroke="#444"/></svg>
          <svg class="ml-[5px]" width="9" height="9" viewBox="0 0 9 9"><path d="M1 1L8 8M8 1L1 8" stroke="#222" stroke-width="1.300"/></svg>
        </div>
      </div>
      <div class="w-[24px] shrink-0 bg-[#f5f5f5] -mt-px"></div>
    </div>
    <!-- status -->
    <div class="h-[14px] shrink-0 bg-[#2b5797] flex items-start text-[10px] leading-[18px] text-[#e6edf6] overflow-hidden">
      <div class="ml-[632px] w-[174px] shrink-0">0 items are selected</div>
      <div class="w-[118px] shrink-0 h-[14px] mt-[1px] bg-white text-[#b5b5b5] pl-[3px] leading-[14px]">Find a command</div>
      <svg class="ml-[2px] shrink-0" width="340" height="14" viewBox="0 0 340 14">
        <path d="M1 9Q2 5 8 5V2L13 6L8 10V8Q4 8 1 9Z" fill="#fff"/>
        <rect x="22" y="2" width="12" height="11" fill="#dbe6f2" stroke="#6d92bd"/><circle cx="28" cy="7" r="3" fill="#fff" stroke="#4a6d92"/><path d="M31 10L34 14" stroke="#c0642e" stroke-width="1.500"/>
        <circle cx="44" cy="5" r="4" fill="#dfe9f4" stroke="#d8e6f6"/><path d="M47 8L52 13" stroke="#c06c3a" stroke-width="2"/>
        <rect x="60" y="4" width="12" height="10" fill="#dfeafa"/><path d="M63 7L65 9M69 7L67 9M63 11L65 9M69 11L67 9" stroke="#234a7c" stroke-width="1.300"/>
        <rect x="79" y="3" width="12" height="11" fill="#dce6f0"/><circle cx="85" cy="8" r="4" fill="#999"/>
        <circle cx="103" cy="7" r="3.500" fill="none" stroke="#44b044" stroke-width="2.500"/><path d="M107 1L110 3L107 5Z" fill="#fff"/>
        <path d="M121 2L125 6H129V10H125L121 12L117 8H113V5H118Z" fill="#8dbcec"/><circle cx="127" cy="12" r="1.500" fill="#44b044"/>
        <rect x="136" y="3" width="12" height="11" fill="#b7d3ef"/><rect x="138" y="6" width="7" height="8" fill="#d0c92b" stroke="#3b8a3a" stroke-width=".6"/>
        <rect x="154" y="1" width="9" height="9" fill="none" stroke="#d7e6f8"/><rect x="158" y="6" width="8" height="8" fill="#ecaf2b"/>
        <circle cx="176" cy="7" r="6" fill="#dfe6ee"/><path d="M172 7H180" stroke="#222" stroke-width="1.600"/>
        <path d="M186 7H281" stroke="#a8c0dc"/>
        <rect x="223" y="2" width="7" height="9" fill="#b8cbe0" stroke="#e4edf6"/><path d="M223 11L226.500 14L230 11Z" fill="#c8d6e6"/>
        <circle cx="288" cy="7" r="5.500" fill="#e6edf5"/><path d="M284 7H292M288 3V11" stroke="#222" stroke-width="1.500"/>
        <circle cx="306" cy="7" r="6" fill="#dd1c1c" stroke="#f2a9a9"/>
        <path d="M328 1L334 7H331V11H325V7H322Z" fill="#15b52e"/><path d="M325 12H331V14H325Z" fill="#d9e6d9"/>
      </svg>
    </div>
  </div>
  <div class="h-[22px] shrink-0 bg-black"></div>
</div>
</body></html>
